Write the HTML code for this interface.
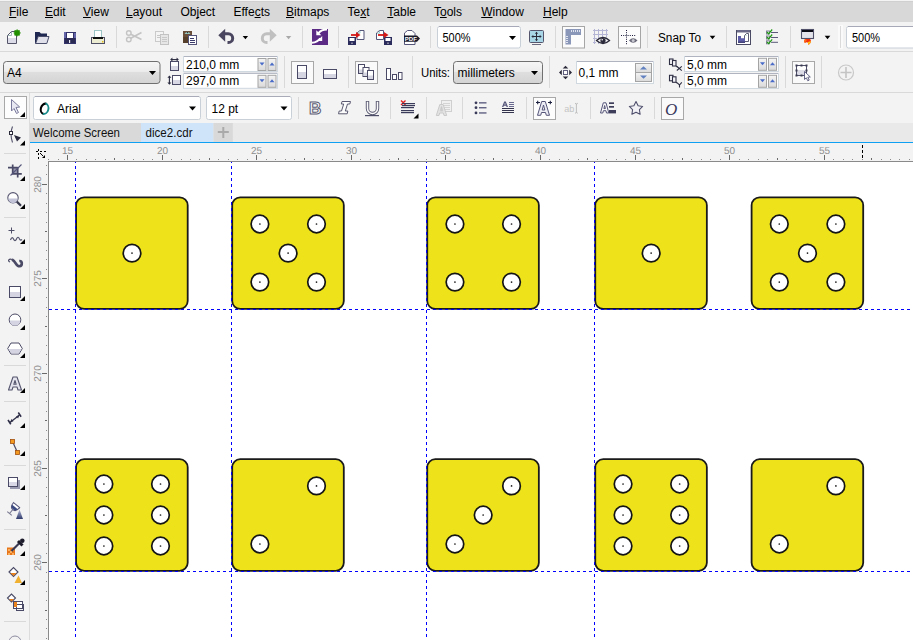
<!DOCTYPE html>
<html><head><meta charset="utf-8"><style>
*{margin:0;padding:0;box-sizing:border-box}
html,body{width:913px;height:640px;overflow:hidden;background:#f3f3f3;font-family:"Liberation Sans",sans-serif;font-size:12px;color:#000}
.a{position:absolute}
.t{position:absolute;white-space:nowrap;line-height:14px}
.sep{position:absolute;background:#d6d6d6;width:1px}
.hsep{position:absolute;background:#d6d6d6;height:1px}
u{text-decoration:none;border-bottom:1px solid #000;}
</style></head><body>
<svg style="position:absolute;left:0;top:0" width="913" height="640">
<rect x="30" y="143" width="883" height="18" fill="#f3f3f3"/>
<rect x="30" y="143" width="18" height="497" fill="#f3f3f3"/>
<rect x="49" y="162" width="864" height="478" fill="#ffffff"/>
<rect x="48" y="161" width="865" height="1" fill="#8a8a8a"/>
<rect x="48" y="161" width="1" height="479" fill="#8a8a8a"/>
<rect x="48" y="159" width="1" height="1" fill="#8a8a8a"/>
<rect x="58" y="159" width="1" height="1" fill="#8a8a8a"/>
<rect x="67" y="155" width="1" height="5" fill="#6a6a6a"/>
<text x="67.5" y="154" font-size="10" text-anchor="middle" fill="#8e8e8e" style="text-rendering:geometricPrecision" font-family="Liberation Sans">15</text>
<rect x="76" y="159" width="1" height="1" fill="#8a8a8a"/>
<rect x="86" y="159" width="1" height="1" fill="#8a8a8a"/>
<rect x="95" y="159" width="1" height="1" fill="#8a8a8a"/>
<rect x="105" y="159" width="1" height="1" fill="#8a8a8a"/>
<rect x="114" y="158" width="1" height="2" fill="#6a6a6a"/>
<rect x="124" y="159" width="1" height="1" fill="#8a8a8a"/>
<rect x="133" y="159" width="1" height="1" fill="#8a8a8a"/>
<rect x="143" y="159" width="1" height="1" fill="#8a8a8a"/>
<rect x="152" y="159" width="1" height="1" fill="#8a8a8a"/>
<rect x="162" y="155" width="1" height="5" fill="#6a6a6a"/>
<text x="162.5" y="154" font-size="10" text-anchor="middle" fill="#8e8e8e" style="text-rendering:geometricPrecision" font-family="Liberation Sans">20</text>
<rect x="171" y="159" width="1" height="1" fill="#8a8a8a"/>
<rect x="181" y="159" width="1" height="1" fill="#8a8a8a"/>
<rect x="190" y="159" width="1" height="1" fill="#8a8a8a"/>
<rect x="199" y="159" width="1" height="1" fill="#8a8a8a"/>
<rect x="209" y="158" width="1" height="2" fill="#6a6a6a"/>
<rect x="218" y="159" width="1" height="1" fill="#8a8a8a"/>
<rect x="228" y="159" width="1" height="1" fill="#8a8a8a"/>
<rect x="237" y="159" width="1" height="1" fill="#8a8a8a"/>
<rect x="247" y="159" width="1" height="1" fill="#8a8a8a"/>
<rect x="256" y="155" width="1" height="5" fill="#6a6a6a"/>
<text x="256.5" y="154" font-size="10" text-anchor="middle" fill="#8e8e8e" style="text-rendering:geometricPrecision" font-family="Liberation Sans">25</text>
<rect x="266" y="159" width="1" height="1" fill="#8a8a8a"/>
<rect x="275" y="159" width="1" height="1" fill="#8a8a8a"/>
<rect x="285" y="159" width="1" height="1" fill="#8a8a8a"/>
<rect x="294" y="159" width="1" height="1" fill="#8a8a8a"/>
<rect x="304" y="158" width="1" height="2" fill="#6a6a6a"/>
<rect x="313" y="159" width="1" height="1" fill="#8a8a8a"/>
<rect x="322" y="159" width="1" height="1" fill="#8a8a8a"/>
<rect x="332" y="159" width="1" height="1" fill="#8a8a8a"/>
<rect x="341" y="159" width="1" height="1" fill="#8a8a8a"/>
<rect x="351" y="155" width="1" height="5" fill="#6a6a6a"/>
<text x="351.5" y="154" font-size="10" text-anchor="middle" fill="#8e8e8e" style="text-rendering:geometricPrecision" font-family="Liberation Sans">30</text>
<rect x="360" y="159" width="1" height="1" fill="#8a8a8a"/>
<rect x="370" y="159" width="1" height="1" fill="#8a8a8a"/>
<rect x="379" y="159" width="1" height="1" fill="#8a8a8a"/>
<rect x="389" y="159" width="1" height="1" fill="#8a8a8a"/>
<rect x="398" y="158" width="1" height="2" fill="#6a6a6a"/>
<rect x="408" y="159" width="1" height="1" fill="#8a8a8a"/>
<rect x="417" y="159" width="1" height="1" fill="#8a8a8a"/>
<rect x="426" y="159" width="1" height="1" fill="#8a8a8a"/>
<rect x="436" y="159" width="1" height="1" fill="#8a8a8a"/>
<rect x="445" y="155" width="1" height="5" fill="#6a6a6a"/>
<text x="445.5" y="154" font-size="10" text-anchor="middle" fill="#8e8e8e" style="text-rendering:geometricPrecision" font-family="Liberation Sans">35</text>
<rect x="455" y="159" width="1" height="1" fill="#8a8a8a"/>
<rect x="464" y="159" width="1" height="1" fill="#8a8a8a"/>
<rect x="474" y="159" width="1" height="1" fill="#8a8a8a"/>
<rect x="483" y="159" width="1" height="1" fill="#8a8a8a"/>
<rect x="493" y="158" width="1" height="2" fill="#6a6a6a"/>
<rect x="502" y="159" width="1" height="1" fill="#8a8a8a"/>
<rect x="512" y="159" width="1" height="1" fill="#8a8a8a"/>
<rect x="521" y="159" width="1" height="1" fill="#8a8a8a"/>
<rect x="531" y="159" width="1" height="1" fill="#8a8a8a"/>
<rect x="540" y="155" width="1" height="5" fill="#6a6a6a"/>
<text x="540.5" y="154" font-size="10" text-anchor="middle" fill="#8e8e8e" style="text-rendering:geometricPrecision" font-family="Liberation Sans">40</text>
<rect x="549" y="159" width="1" height="1" fill="#8a8a8a"/>
<rect x="559" y="159" width="1" height="1" fill="#8a8a8a"/>
<rect x="568" y="159" width="1" height="1" fill="#8a8a8a"/>
<rect x="578" y="159" width="1" height="1" fill="#8a8a8a"/>
<rect x="587" y="158" width="1" height="2" fill="#6a6a6a"/>
<rect x="597" y="159" width="1" height="1" fill="#8a8a8a"/>
<rect x="606" y="159" width="1" height="1" fill="#8a8a8a"/>
<rect x="616" y="159" width="1" height="1" fill="#8a8a8a"/>
<rect x="625" y="159" width="1" height="1" fill="#8a8a8a"/>
<rect x="635" y="155" width="1" height="5" fill="#6a6a6a"/>
<text x="635.5" y="154" font-size="10" text-anchor="middle" fill="#8e8e8e" style="text-rendering:geometricPrecision" font-family="Liberation Sans">45</text>
<rect x="644" y="159" width="1" height="1" fill="#8a8a8a"/>
<rect x="654" y="159" width="1" height="1" fill="#8a8a8a"/>
<rect x="663" y="159" width="1" height="1" fill="#8a8a8a"/>
<rect x="672" y="159" width="1" height="1" fill="#8a8a8a"/>
<rect x="682" y="158" width="1" height="2" fill="#6a6a6a"/>
<rect x="691" y="159" width="1" height="1" fill="#8a8a8a"/>
<rect x="701" y="159" width="1" height="1" fill="#8a8a8a"/>
<rect x="710" y="159" width="1" height="1" fill="#8a8a8a"/>
<rect x="720" y="159" width="1" height="1" fill="#8a8a8a"/>
<rect x="729" y="155" width="1" height="5" fill="#6a6a6a"/>
<text x="729.5" y="154" font-size="10" text-anchor="middle" fill="#8e8e8e" style="text-rendering:geometricPrecision" font-family="Liberation Sans">50</text>
<rect x="739" y="159" width="1" height="1" fill="#8a8a8a"/>
<rect x="748" y="159" width="1" height="1" fill="#8a8a8a"/>
<rect x="758" y="159" width="1" height="1" fill="#8a8a8a"/>
<rect x="767" y="159" width="1" height="1" fill="#8a8a8a"/>
<rect x="777" y="158" width="1" height="2" fill="#6a6a6a"/>
<rect x="786" y="159" width="1" height="1" fill="#8a8a8a"/>
<rect x="795" y="159" width="1" height="1" fill="#8a8a8a"/>
<rect x="805" y="159" width="1" height="1" fill="#8a8a8a"/>
<rect x="814" y="159" width="1" height="1" fill="#8a8a8a"/>
<rect x="824" y="155" width="1" height="5" fill="#6a6a6a"/>
<text x="824.5" y="154" font-size="10" text-anchor="middle" fill="#8e8e8e" style="text-rendering:geometricPrecision" font-family="Liberation Sans">55</text>
<rect x="833" y="159" width="1" height="1" fill="#8a8a8a"/>
<rect x="843" y="159" width="1" height="1" fill="#8a8a8a"/>
<rect x="852" y="159" width="1" height="1" fill="#8a8a8a"/>
<rect x="862" y="159" width="1" height="1" fill="#8a8a8a"/>
<rect x="871" y="158" width="1" height="2" fill="#6a6a6a"/>
<rect x="881" y="159" width="1" height="1" fill="#8a8a8a"/>
<rect x="890" y="159" width="1" height="1" fill="#8a8a8a"/>
<rect x="899" y="159" width="1" height="1" fill="#8a8a8a"/>
<rect x="909" y="159" width="1" height="1" fill="#8a8a8a"/>
<rect x="46" y="165" width="1" height="1" fill="#8a8a8a"/>
<rect x="46" y="174" width="1" height="1" fill="#8a8a8a"/>
<rect x="42" y="184" width="5" height="1" fill="#6a6a6a"/>
<text transform="translate(41,184.5) rotate(-90)" x="0" y="0" font-size="10" text-anchor="middle" fill="#8e8e8e" style="text-rendering:geometricPrecision" font-family="Liberation Sans">280</text>
<rect x="46" y="193" width="1" height="1" fill="#8a8a8a"/>
<rect x="46" y="203" width="1" height="1" fill="#8a8a8a"/>
<rect x="46" y="212" width="1" height="1" fill="#8a8a8a"/>
<rect x="46" y="222" width="1" height="1" fill="#8a8a8a"/>
<rect x="45" y="231" width="2" height="1" fill="#6a6a6a"/>
<rect x="46" y="241" width="1" height="1" fill="#8a8a8a"/>
<rect x="46" y="250" width="1" height="1" fill="#8a8a8a"/>
<rect x="46" y="259" width="1" height="1" fill="#8a8a8a"/>
<rect x="46" y="269" width="1" height="1" fill="#8a8a8a"/>
<rect x="42" y="278" width="5" height="1" fill="#6a6a6a"/>
<text transform="translate(41,278.5) rotate(-90)" x="0" y="0" font-size="10" text-anchor="middle" fill="#8e8e8e" style="text-rendering:geometricPrecision" font-family="Liberation Sans">275</text>
<rect x="46" y="288" width="1" height="1" fill="#8a8a8a"/>
<rect x="46" y="297" width="1" height="1" fill="#8a8a8a"/>
<rect x="46" y="307" width="1" height="1" fill="#8a8a8a"/>
<rect x="46" y="316" width="1" height="1" fill="#8a8a8a"/>
<rect x="45" y="326" width="2" height="1" fill="#6a6a6a"/>
<rect x="46" y="335" width="1" height="1" fill="#8a8a8a"/>
<rect x="46" y="345" width="1" height="1" fill="#8a8a8a"/>
<rect x="46" y="354" width="1" height="1" fill="#8a8a8a"/>
<rect x="46" y="364" width="1" height="1" fill="#8a8a8a"/>
<rect x="42" y="373" width="5" height="1" fill="#6a6a6a"/>
<text transform="translate(41,373.5) rotate(-90)" x="0" y="0" font-size="10" text-anchor="middle" fill="#8e8e8e" style="text-rendering:geometricPrecision" font-family="Liberation Sans">270</text>
<rect x="46" y="382" width="1" height="1" fill="#8a8a8a"/>
<rect x="46" y="392" width="1" height="1" fill="#8a8a8a"/>
<rect x="46" y="401" width="1" height="1" fill="#8a8a8a"/>
<rect x="46" y="411" width="1" height="1" fill="#8a8a8a"/>
<rect x="45" y="420" width="2" height="1" fill="#6a6a6a"/>
<rect x="46" y="430" width="1" height="1" fill="#8a8a8a"/>
<rect x="46" y="439" width="1" height="1" fill="#8a8a8a"/>
<rect x="46" y="449" width="1" height="1" fill="#8a8a8a"/>
<rect x="46" y="458" width="1" height="1" fill="#8a8a8a"/>
<rect x="42" y="468" width="5" height="1" fill="#6a6a6a"/>
<text transform="translate(41,468.5) rotate(-90)" x="0" y="0" font-size="10" text-anchor="middle" fill="#8e8e8e" style="text-rendering:geometricPrecision" font-family="Liberation Sans">265</text>
<rect x="46" y="477" width="1" height="1" fill="#8a8a8a"/>
<rect x="46" y="487" width="1" height="1" fill="#8a8a8a"/>
<rect x="46" y="496" width="1" height="1" fill="#8a8a8a"/>
<rect x="46" y="505" width="1" height="1" fill="#8a8a8a"/>
<rect x="45" y="515" width="2" height="1" fill="#6a6a6a"/>
<rect x="46" y="524" width="1" height="1" fill="#8a8a8a"/>
<rect x="46" y="534" width="1" height="1" fill="#8a8a8a"/>
<rect x="46" y="543" width="1" height="1" fill="#8a8a8a"/>
<rect x="46" y="553" width="1" height="1" fill="#8a8a8a"/>
<rect x="42" y="562" width="5" height="1" fill="#6a6a6a"/>
<text transform="translate(41,562.5) rotate(-90)" x="0" y="0" font-size="10" text-anchor="middle" fill="#8e8e8e" style="text-rendering:geometricPrecision" font-family="Liberation Sans">260</text>
<rect x="46" y="572" width="1" height="1" fill="#8a8a8a"/>
<rect x="46" y="581" width="1" height="1" fill="#8a8a8a"/>
<rect x="46" y="591" width="1" height="1" fill="#8a8a8a"/>
<rect x="46" y="600" width="1" height="1" fill="#8a8a8a"/>
<rect x="45" y="610" width="2" height="1" fill="#6a6a6a"/>
<rect x="46" y="619" width="1" height="1" fill="#8a8a8a"/>
<rect x="46" y="628" width="1" height="1" fill="#8a8a8a"/>
<rect x="46" y="638" width="1" height="1" fill="#8a8a8a"/>
<line x1="862.5" y1="145" x2="862.5" y2="160" stroke="#000" stroke-width="1" stroke-dasharray="3,2"/>
<path d="M38 149h1v2h-1zM38 153h1v2h-1zM38 157h1v2h-1zM36 151h2v1h-2zM40 151h2v1h-2zM44 151h2v1h-2z" fill="#000"/>
<path d="M40 153h1v1h-1zM41 154h1v1h-1zM42 155h1v1h-1z" fill="#000"/>
<path d="M42 158 L45 155 V158 Z" fill="#000"/>

<rect x="76.1" y="197.3" width="111.6" height="111.6" rx="8" ry="8" fill="#eee31a" stroke="#1a1a1a" stroke-width="1.8"/>
<circle cx="132.0" cy="253.10000000000002" r="8.8" fill="#fff" stroke="#151515" stroke-width="1.7"/>
<circle cx="132.0" cy="253.10000000000002" r="0.85" fill="#1a1a1a"/>
<rect x="232.2" y="197.3" width="111.6" height="111.6" rx="8" ry="8" fill="#eee31a" stroke="#1a1a1a" stroke-width="1.8"/>
<circle cx="259.9" cy="224.0" r="8.8" fill="#fff" stroke="#151515" stroke-width="1.7"/>
<circle cx="259.9" cy="224.0" r="0.85" fill="#1a1a1a"/>
<circle cx="316.5" cy="224.0" r="8.8" fill="#fff" stroke="#151515" stroke-width="1.7"/>
<circle cx="316.5" cy="224.0" r="0.85" fill="#1a1a1a"/>
<circle cx="288.09999999999997" cy="253.10000000000002" r="8.8" fill="#fff" stroke="#151515" stroke-width="1.7"/>
<circle cx="288.09999999999997" cy="253.10000000000002" r="0.85" fill="#1a1a1a"/>
<circle cx="259.9" cy="282.1" r="8.8" fill="#fff" stroke="#151515" stroke-width="1.7"/>
<circle cx="259.9" cy="282.1" r="0.85" fill="#1a1a1a"/>
<circle cx="316.5" cy="282.1" r="8.8" fill="#fff" stroke="#151515" stroke-width="1.7"/>
<circle cx="316.5" cy="282.1" r="0.85" fill="#1a1a1a"/>
<rect x="427.25" y="197.3" width="111.6" height="111.6" rx="8" ry="8" fill="#eee31a" stroke="#1a1a1a" stroke-width="1.8"/>
<circle cx="454.95" cy="224.0" r="8.8" fill="#fff" stroke="#151515" stroke-width="1.7"/>
<circle cx="454.95" cy="224.0" r="0.85" fill="#1a1a1a"/>
<circle cx="511.55" cy="224.0" r="8.8" fill="#fff" stroke="#151515" stroke-width="1.7"/>
<circle cx="511.55" cy="224.0" r="0.85" fill="#1a1a1a"/>
<circle cx="454.95" cy="282.1" r="8.8" fill="#fff" stroke="#151515" stroke-width="1.7"/>
<circle cx="454.95" cy="282.1" r="0.85" fill="#1a1a1a"/>
<circle cx="511.55" cy="282.1" r="8.8" fill="#fff" stroke="#151515" stroke-width="1.7"/>
<circle cx="511.55" cy="282.1" r="0.85" fill="#1a1a1a"/>
<rect x="595.25" y="197.3" width="111.6" height="111.6" rx="8" ry="8" fill="#eee31a" stroke="#1a1a1a" stroke-width="1.8"/>
<circle cx="651.15" cy="253.10000000000002" r="8.8" fill="#fff" stroke="#151515" stroke-width="1.7"/>
<circle cx="651.15" cy="253.10000000000002" r="0.85" fill="#1a1a1a"/>
<rect x="751.6" y="197.3" width="111.6" height="111.6" rx="8" ry="8" fill="#eee31a" stroke="#1a1a1a" stroke-width="1.8"/>
<circle cx="779.3000000000001" cy="224.0" r="8.8" fill="#fff" stroke="#151515" stroke-width="1.7"/>
<circle cx="779.3000000000001" cy="224.0" r="0.85" fill="#1a1a1a"/>
<circle cx="835.9" cy="224.0" r="8.8" fill="#fff" stroke="#151515" stroke-width="1.7"/>
<circle cx="835.9" cy="224.0" r="0.85" fill="#1a1a1a"/>
<circle cx="807.5" cy="253.10000000000002" r="8.8" fill="#fff" stroke="#151515" stroke-width="1.7"/>
<circle cx="807.5" cy="253.10000000000002" r="0.85" fill="#1a1a1a"/>
<circle cx="779.3000000000001" cy="282.1" r="8.8" fill="#fff" stroke="#151515" stroke-width="1.7"/>
<circle cx="779.3000000000001" cy="282.1" r="0.85" fill="#1a1a1a"/>
<circle cx="835.9" cy="282.1" r="8.8" fill="#fff" stroke="#151515" stroke-width="1.7"/>
<circle cx="835.9" cy="282.1" r="0.85" fill="#1a1a1a"/>
<rect x="76.1" y="459.2" width="111.6" height="111.6" rx="8" ry="8" fill="#eee31a" stroke="#1a1a1a" stroke-width="1.8"/>
<circle cx="103.89999999999999" cy="484.0" r="8.8" fill="#fff" stroke="#151515" stroke-width="1.7"/>
<circle cx="103.89999999999999" cy="484.0" r="0.85" fill="#1a1a1a"/>
<circle cx="160.5" cy="484.0" r="8.8" fill="#fff" stroke="#151515" stroke-width="1.7"/>
<circle cx="160.5" cy="484.0" r="0.85" fill="#1a1a1a"/>
<circle cx="103.89999999999999" cy="515.0" r="8.8" fill="#fff" stroke="#151515" stroke-width="1.7"/>
<circle cx="103.89999999999999" cy="515.0" r="0.85" fill="#1a1a1a"/>
<circle cx="160.5" cy="515.0" r="8.8" fill="#fff" stroke="#151515" stroke-width="1.7"/>
<circle cx="160.5" cy="515.0" r="0.85" fill="#1a1a1a"/>
<circle cx="103.89999999999999" cy="546.0" r="8.8" fill="#fff" stroke="#151515" stroke-width="1.7"/>
<circle cx="103.89999999999999" cy="546.0" r="0.85" fill="#1a1a1a"/>
<circle cx="160.5" cy="546.0" r="8.8" fill="#fff" stroke="#151515" stroke-width="1.7"/>
<circle cx="160.5" cy="546.0" r="0.85" fill="#1a1a1a"/>
<rect x="232.2" y="459.2" width="111.6" height="111.6" rx="8" ry="8" fill="#eee31a" stroke="#1a1a1a" stroke-width="1.8"/>
<circle cx="316.5" cy="485.9" r="8.8" fill="#fff" stroke="#151515" stroke-width="1.7"/>
<circle cx="316.5" cy="485.9" r="0.85" fill="#1a1a1a"/>
<circle cx="259.9" cy="544.0" r="8.8" fill="#fff" stroke="#151515" stroke-width="1.7"/>
<circle cx="259.9" cy="544.0" r="0.85" fill="#1a1a1a"/>
<rect x="427.25" y="459.2" width="111.6" height="111.6" rx="8" ry="8" fill="#eee31a" stroke="#1a1a1a" stroke-width="1.8"/>
<circle cx="511.55" cy="485.9" r="8.8" fill="#fff" stroke="#151515" stroke-width="1.7"/>
<circle cx="511.55" cy="485.9" r="0.85" fill="#1a1a1a"/>
<circle cx="483.15" cy="515.0" r="8.8" fill="#fff" stroke="#151515" stroke-width="1.7"/>
<circle cx="483.15" cy="515.0" r="0.85" fill="#1a1a1a"/>
<circle cx="454.95" cy="544.0" r="8.8" fill="#fff" stroke="#151515" stroke-width="1.7"/>
<circle cx="454.95" cy="544.0" r="0.85" fill="#1a1a1a"/>
<rect x="595.25" y="459.2" width="111.6" height="111.6" rx="8" ry="8" fill="#eee31a" stroke="#1a1a1a" stroke-width="1.8"/>
<circle cx="623.05" cy="484.0" r="8.8" fill="#fff" stroke="#151515" stroke-width="1.7"/>
<circle cx="623.05" cy="484.0" r="0.85" fill="#1a1a1a"/>
<circle cx="679.65" cy="484.0" r="8.8" fill="#fff" stroke="#151515" stroke-width="1.7"/>
<circle cx="679.65" cy="484.0" r="0.85" fill="#1a1a1a"/>
<circle cx="623.05" cy="515.0" r="8.8" fill="#fff" stroke="#151515" stroke-width="1.7"/>
<circle cx="623.05" cy="515.0" r="0.85" fill="#1a1a1a"/>
<circle cx="679.65" cy="515.0" r="8.8" fill="#fff" stroke="#151515" stroke-width="1.7"/>
<circle cx="679.65" cy="515.0" r="0.85" fill="#1a1a1a"/>
<circle cx="623.05" cy="546.0" r="8.8" fill="#fff" stroke="#151515" stroke-width="1.7"/>
<circle cx="623.05" cy="546.0" r="0.85" fill="#1a1a1a"/>
<circle cx="679.65" cy="546.0" r="8.8" fill="#fff" stroke="#151515" stroke-width="1.7"/>
<circle cx="679.65" cy="546.0" r="0.85" fill="#1a1a1a"/>
<rect x="751.6" y="459.2" width="111.6" height="111.6" rx="8" ry="8" fill="#eee31a" stroke="#1a1a1a" stroke-width="1.8"/>
<circle cx="835.9" cy="485.9" r="8.8" fill="#fff" stroke="#151515" stroke-width="1.7"/>
<circle cx="835.9" cy="485.9" r="0.85" fill="#1a1a1a"/>
<circle cx="779.3000000000001" cy="544.0" r="8.8" fill="#fff" stroke="#151515" stroke-width="1.7"/>
<circle cx="779.3000000000001" cy="544.0" r="0.85" fill="#1a1a1a"/>
<line x1="75.5" y1="162" x2="75.5" y2="640" stroke="#0000ff" stroke-width="1" stroke-dasharray="3,3" stroke-dashoffset="2"/>
<line x1="231.5" y1="162" x2="231.5" y2="640" stroke="#0000ff" stroke-width="1" stroke-dasharray="3,3" stroke-dashoffset="2"/>
<line x1="426.5" y1="162" x2="426.5" y2="640" stroke="#0000ff" stroke-width="1" stroke-dasharray="3,3" stroke-dashoffset="2"/>
<line x1="594.5" y1="162" x2="594.5" y2="640" stroke="#0000ff" stroke-width="1" stroke-dasharray="3,3" stroke-dashoffset="2"/>
<line x1="49" y1="309.5" x2="913" y2="309.5" stroke="#0000ff" stroke-width="1" stroke-dasharray="3,3"/>
<line x1="49" y1="571.5" x2="913" y2="571.5" stroke="#0000ff" stroke-width="1" stroke-dasharray="3,3"/>
</svg>
<svg style="position:absolute;left:0;top:0" width="913" height="640" font-family="Liberation Sans">
<rect x="0" y="0" width="913" height="22" fill="#d8d8d8" />
<rect x="0" y="0" width="913" height="1" fill="#f4f4f4" />
<rect x="0" y="1" width="913" height="1" fill="#d0d0d0" />
<text id="m_File" x="9" y="16" font-size="12" fill="#000">File</text>
<text id="m_Edit" x="45" y="16" font-size="12" fill="#000">Edit</text>
<text id="m_View" x="83" y="16" font-size="12" fill="#000">View</text>
<text id="m_Layout" x="126" y="16" font-size="12" fill="#000">Layout</text>
<text id="m_Object" x="180.5" y="16" font-size="12" fill="#000">Object</text>
<text id="m_Effects" x="233.5" y="16" font-size="12" fill="#000">Effects</text>
<text id="m_Bitmaps" x="286" y="16" font-size="12" fill="#000">Bitmaps</text>
<text id="m_Text" x="347.5" y="16" font-size="12" fill="#000">Text</text>
<text id="m_Table" x="387.3" y="16" font-size="12" fill="#000">Table</text>
<text id="m_Tools" x="434" y="16" font-size="12" fill="#000">Tools</text>
<text id="m_Window" x="481.2" y="16" font-size="12" fill="#000">Window</text>
<text id="m_Help" x="543" y="16" font-size="12" fill="#000">Help</text>
<rect x="9" y="17" width="7.3" height="1" fill="#000" />
<rect x="45" y="17" width="8" height="1" fill="#000" />
<rect x="83" y="17" width="7.8" height="1" fill="#000" />
<rect x="126" y="17" width="6.7" height="1" fill="#000" />
<rect x="196.5" y="17" width="2.7" height="1" fill="#000" />
<rect x="254.6" y="17" width="6" height="1" fill="#000" />
<rect x="286" y="17" width="8" height="1" fill="#000" />
<rect x="360.2" y="17" width="6" height="1" fill="#000" />
<rect x="387.3" y="17" width="6" height="1" fill="#000" />
<rect x="440" y="17" width="6.7" height="1" fill="#000" />
<rect x="481.2" y="17" width="11.3" height="1" fill="#000" />
<rect x="543" y="17" width="8.7" height="1" fill="#000" />
<rect x="0" y="51" width="913" height="1" fill="#d9d9d9" />
<rect x="0" y="92" width="913" height="1" fill="#d9d9d9" />
<rect x="29" y="93" width="1" height="547" fill="#dcdcdc" />
<rect x="30" y="123" width="883" height="19" fill="#e9e9e9" />
<rect x="30" y="123" width="111" height="19" fill="#d9d9d9" />
<rect x="141" y="123" width="72.5" height="19" fill="#cfe4f9" />
<rect x="213.5" y="123" width="19.3" height="19" fill="#d9d9d9" />
<rect x="30" y="142" width="883" height="1" fill="#0ea0f2" />
<text x="33" y="137" font-size="12" fill="#111" textLength="87" lengthAdjust="spacingAndGlyphs">Welcome Screen</text>
<text x="145.5" y="137" font-size="12" fill="#111" textLength="47" lengthAdjust="spacingAndGlyphs">dice2.cdr</text>
<path d="M223.3 127v11M217.8 132h11" stroke="#aaaaaa" stroke-width="2"/>
<path d="M7.5 35.5 L11.5 31.5 H16.5 V43.5 H7.5 Z" fill="#fff" stroke="#55556a" stroke-width="1"/>
<rect x="8" y="38" width="8" height="5" fill="#dcdce8"/>
<path d="M8 35.5 H11.5 V32" fill="none" stroke="#9fb8b8" stroke-width="1"/>
<path d="M20.50 32.90 L19.50 33.89 L19.50 35.30 L18.09 35.30 L17.10 36.30 L16.11 35.30 L14.70 35.30 L14.70 33.89 L13.70 32.90 L14.70 31.91 L14.70 30.50 L16.11 30.50 L17.10 29.50 L18.09 30.50 L19.50 30.50 L19.50 31.91Z" fill="#229000" stroke="#229000" stroke-width="0.6" stroke-linejoin="round"/>
<path d="M35 32 H39.5 L41 33.5 H47 V36 H38.5 L36.5 43.5 H35 Z" fill="#1f2850"/>
<path d="M38.2 36.5 H49 L46.8 43.5 H35.6 Z" fill="#dfe0ea" stroke="#4a4d6a" stroke-width="1"/>
<rect x="64" y="32" width="12" height="12" fill="#34346a"/>
<rect x="64" y="32" width="2" height="6" fill="#6464a8"/>
<rect x="74" y="33" width="2" height="5" fill="#6464a8"/>
<rect x="67" y="33" width="6" height="5" fill="#fff"/>
<rect x="65" y="38" width="10" height="5" fill="#2a2a55"/>
<rect x="69" y="40" width="1.2" height="3" fill="#e8e8f0"/>
<rect x="94.5" y="30.5" width="7" height="7" fill="#fff" stroke="#9cc4c4" stroke-width="1"/>
<rect x="91.5" y="37.5" width="13" height="6" fill="#ececd2" stroke="#4e4e64" stroke-width="1"/>
<rect x="93" y="37" width="10" height="2" fill="#111"/>
<rect x="102" y="41" width="1.5" height="1.5" fill="#e0c020"/>
<rect x="116" y="26" width="1" height="22" fill="#d9d9d9" />
<rect x="208" y="26" width="1" height="22" fill="#d9d9d9" />
<rect x="302" y="26" width="1" height="22" fill="#d9d9d9" />
<rect x="338" y="26" width="1" height="22" fill="#d9d9d9" />
<rect x="430" y="26" width="1" height="22" fill="#d9d9d9" />
<rect x="555" y="26" width="1" height="22" fill="#d9d9d9" />
<rect x="647" y="26" width="1" height="22" fill="#d9d9d9" />
<rect x="726" y="26" width="1" height="22" fill="#d9d9d9" />
<rect x="790" y="26" width="1" height="22" fill="#d9d9d9" />
<rect x="838" y="25" width="5" height="24" fill="#fafafa" />
<rect x="840" y="26" width="1" height="22" fill="#dadada" />
<circle cx="128.8" cy="33" r="2.3" fill="none" stroke="#c4c4c4" stroke-width="1.4"/>
<circle cx="128.8" cy="39.5" r="2.3" fill="none" stroke="#c4c4c4" stroke-width="1.4"/>
<path d="M130.8 34.3 L141.5 39.5 M130.8 38.2 L141.5 32.5" stroke="#c4c4c4" stroke-width="1.6"/>
<rect x="155.5" y="31.5" width="8" height="10" fill="#f4f4f4" stroke="#cacaca"/>
<rect x="160.5" y="34.5" width="8" height="10" fill="#e6e6e6" stroke="#c2c2c2"/>
<path d="M157 35.5h4M157 37.5h3M162 37.5h5M162 39.5h5M162 41.5h5" stroke="#c8c8c8"/>
<rect x="183" y="31" width="9" height="12" fill="#6a4d36"/>
<rect x="183" y="37" width="9" height="6" fill="#56402c"/>
<path d="M184.5 34 Q187.5 29.5 190.5 34 Z" fill="#9ccac4"/>
<circle cx="187.5" cy="32.5" r="0.8" fill="#333"/>
<rect x="188.5" y="35.5" width="8" height="9" fill="#fff" stroke="#55557a"/>
<path d="M190 38.5h4M190 40.5h5M190 42.5h5" stroke="#3a3a6a"/>
<path d="M218.3 35.3 L225.2 28.8 V41.8 Z" fill="#4a4660"/>
<path d="M224 33.8 H228.3 A4.4 4.4 0 0 1 228.3 42.6 H227.5" fill="none" stroke="#4a4660" stroke-width="3"/>
<path d="M242.70000000000002 35.9 H248.1 L245.4 39.300000000000004 Z" fill="#000"/>
<path d="M276.7 35.3 L269.8 28.8 V41.8 Z" fill="#c0c0c0"/>
<path d="M271 33.8 H266.7 A4.4 4.4 0 0 0 266.7 42.6 H267.5" fill="none" stroke="#c0c0c0" stroke-width="3"/>
<path d="M285.90000000000003 35.9 H291.3 L288.6 39.300000000000004 Z" fill="#a8a8a8"/>
<rect x="312" y="29" width="16" height="16" fill="#5a2a84"/>
<path d="M316.3 30.3 V35.3 H321.3 Z M322.2 36 V41 H317.2 Z" fill="#fff"/>
<path d="M318.3 33.3 Q321.5 29.5 327 29.6 M320.3 38.3 Q317.5 42.3 312 42.8" fill="none" stroke="#fff" stroke-width="2"/>
<path d="M357.0 33 L360.0 30.5 H364.0 V39.5 H357.0 Z" fill="#fff" stroke="#55557a"/><path d="M357.5 33.2 H360.0 V31" fill="none" stroke="#9cc"/>
<rect x="348" y="37" width="8" height="8" fill="#2c2c5c"/><rect x="349.5" y="38" width="5" height="3" fill="#fff"/><rect x="351.5" y="42.5" width="1" height="1.5" fill="#ddd"/>
<path d="M351 35 H357" stroke="#d41818" stroke-width="1.8"/><path d="M356 32 L360.5 35 L356 38 Z" fill="#d41818"/>
<path d="M376.5 33 L379.5 30.5 H383.5 V39.5 H376.5 Z" fill="#fff" stroke="#55557a"/><path d="M377 33.2 H379.5 V31" fill="none" stroke="#9cc"/>
<rect x="384" y="37" width="8" height="8" fill="#2c2c5c"/><rect x="385.5" y="38" width="5" height="3" fill="#fff"/><rect x="387.5" y="42.5" width="1" height="1.5" fill="#ddd"/>
<path d="M378 35 H385" stroke="#d41818" stroke-width="1.8"/><path d="M384 32 L388.5 35 L384 38 Z" fill="#d41818"/>
<path d="M404.5 33 L407.5 30.5 H412 L415 33.5 V44.5 H404.5 Z" fill="#fff" stroke="#55557a"/>
<path d="M404 35.5 H417 L420 38.5 L417 41.8 H404 Z" fill="#1a1a2a"/>
<text x="404.8" y="41" font-size="6" font-weight="bold" fill="#fff" font-family="Liberation Sans">PDF</text>
<rect x="437.5" y="26.5" width="83" height="21.5" rx="2" fill="#fff" stroke="#c9d0d8"/>
<rect x="439" y="26" width="80" height="1" fill="#a7a9b8" />
<text x="442.5" y="42" font-size="12" fill="#000" font-family="Liberation Sans" textLength="28" lengthAdjust="spacingAndGlyphs">500%</text>
<path d="M509.0 36.0 H516.0 L512.5 40.0 Z" fill="#000"/>
<rect x="529.5" y="30.5" width="14" height="12" rx="1" fill="#a9d6e6" stroke="#55556e"/>
<path d="M532 44.5 H541" stroke="#6a6a80"/>
<path d="M536.5 32.5 V40.5 M532 36.5 H541" stroke="#2a2a3a" stroke-width="1"/>
<path d="M536.5 31.8 l-1.6 2 h3.2z M536.5 41.2 l-1.6 -2 h3.2z M531.3 36.5 l2 -1.6 v3.2z M541.7 36.5 l-2 -1.6 v3.2z" fill="#2a2a3a"/>
<rect x="562.5" y="26.5" width="22" height="21.5" fill="#fcfcfc" stroke="#a6a6a6"/>
<path d="M565.5 29 H581 V35 H571 V44.5 H565.5 Z" fill="#8b97b8"/>
<path d="M571.5 30v2M573.5 30v2M575.5 30v2M577.5 30v2M579.5 30v2M566 36.5h2M566 38.5h2M566 40.5h2M566 42.5h2" stroke="#dfe4ef" stroke-width="1"/>
<path d="M594.5 29v15M598.5 29v15M602.5 29v8M606.5 29v8M593 30.5h15M593 34.5h15M593 38.5h4M593 42.5h3" stroke="#b4b4d4" stroke-width="1"/>
<path d="M596.5 40.5 Q603 34.5 609.5 40.5 Q603 46.5 596.5 40.5 Z" fill="#f0f0f4" stroke="#2a2a3a" stroke-width="1.3"/>
<circle cx="603" cy="40.5" r="2.6" fill="#2a2a3a"/><circle cx="602.2" cy="39.7" r="0.8" fill="#fff"/>
<rect x="618.5" y="26.5" width="22" height="21.5" fill="#fcfcfc" stroke="#a6a6a6"/>
<path d="M626.5 30v15M621 35.5h15" stroke="#1a1a3a" stroke-width="1" stroke-dasharray="1,1.2"/>
<path d="M629 40.5 Q633 36 637.5 40.5 Q633 45 629 40.5 Z" fill="#6a6a7a"/>
<circle cx="633.2" cy="40.5" r="1.5" fill="#c8c8d0"/>
<text x="658" y="42" font-size="12" fill="#000" font-family="Liberation Sans" textLength="43" lengthAdjust="spacingAndGlyphs">Snap To</text>
<path d="M709.7 35.8 H715.3 L712.5 39.2 Z" fill="#000"/>
<rect x="736.5" y="30.5" width="14" height="14" fill="#fff" stroke="#4a4a64"/>
<rect x="737" y="30" width="13" height="2.5" fill="#6a6a88" />
<path d="M744.5 35.5 L746.5 33.5 H748.5 V41.5 H744.5 Z" fill="#fff" stroke="#4a4a64" stroke-width="0.9"/>
<path d="M745 36 L746.5 34.5 V36 Z" fill="#9ccac4"/>
<path d="M738 43 V36 H741 V38.3 H745 V43 Z" fill="#5c5ca8"/>
<rect x="738" y="41.5" width="7" height="1.5" fill="#44447a" />
<rect x="766.5" y="31.0" width="3" height="3" fill="#e8e8ee" stroke="#7a7a90" stroke-width="0.9"/>
<path d="M767 32.0 l1.6 1.8 l3.6 -4.3" fill="none" stroke="#1f9a10" stroke-width="1.2"/>
<rect x="771" y="32.0" width="7" height="1" fill="#5a5a78" />
<rect x="766.5" y="36.0" width="3" height="3" fill="#e8e8ee" stroke="#7a7a90" stroke-width="0.9"/>
<path d="M767 37.0 l1.6 1.8 l3.6 -4.3" fill="none" stroke="#1f9a10" stroke-width="1.2"/>
<rect x="771" y="37.0" width="7" height="1" fill="#5a5a78" />
<rect x="766.5" y="40.8" width="3" height="3" fill="#e8e8ee" stroke="#7a7a90" stroke-width="0.9"/>
<path d="M767 41.8 l1.6 1.8 l3.6 -4.3" fill="none" stroke="#1f9a10" stroke-width="1.2"/>
<rect x="771" y="41.8" width="7" height="1" fill="#5a5a78" />
<rect x="801.5" y="29.5" width="12" height="9" fill="#e2e2ea" stroke="#50506a" stroke-width="1.1"/>
<rect x="802" y="30" width="11" height="2" fill="#0a0a14" />
<path d="M805 39 Q803.3 41.5 805 43 Q806 42 807.3 42.3 Q808.5 43 808.3 45 Q811.5 43 810.8 40 L810 39 Z" fill="#f03010"/>
<path d="M807.3 42.3 Q808.5 43 808.3 45 Q811.2 43.5 810.9 41 Z" fill="#ffc010"/>
<path d="M805 39 Q803.3 41.5 805 43 Q805.5 41 807 40 Z" fill="#ff7010"/>
<path d="M824.7 35.8 H830.3 L827.5 39.2 Z" fill="#000"/>
<rect x="846.5" y="26.5" width="80" height="21.5" rx="2" fill="#fff" stroke="#c9d0d8"/>
<rect x="848" y="26" width="70" height="1" fill="#a7a9b8" />
<text x="852" y="42" font-size="12" fill="#000" font-family="Liberation Sans" textLength="28" lengthAdjust="spacingAndGlyphs">500%</text>
<defs><linearGradient id="cg" x1="0" y1="0" x2="0" y2="1"><stop offset="0" stop-color="#f6f6f6"/><stop offset="0.45" stop-color="#ececec"/><stop offset="0.5" stop-color="#dedede"/><stop offset="1" stop-color="#d4d4d4"/></linearGradient><linearGradient id="sg" x1="0" y1="0" x2="0" y2="1"><stop offset="0" stop-color="#f4f4f4"/><stop offset="1" stop-color="#dadada"/></linearGradient></defs>
<rect x="3.5" y="61.5" width="156.5" height="22" rx="3" fill="url(#cg)" stroke="#707070"/>
<text x="7" y="77" font-size="12" fill="#000" font-family="Liberation Sans" >A4</text>
<path d="M149.0 71.0 H156.0 L152.5 75.0 Z" fill="#000"/>
<path d="M171.5 59.6 H177.5" stroke="#2a2a40" stroke-width="1.1"/><path d="M170.2 59.6 l2.2 -2 v4z M178.8 59.6 l-2.2 -2 v4z" fill="#2a2a40"/>
<rect x="170.5" y="61.5" width="8" height="9" fill="#fff" stroke="#4a4a66"/><rect x="171" y="66" width="7" height="4" fill="#d8d8e4"/>
<path d="M169.4 77 V83.3" stroke="#2a2a40" stroke-width="1.1"/><path d="M169.4 75.6 l-2 2.2 h4z M169.4 84.7 l-2 -2.2 h4z" fill="#2a2a40"/>
<rect x="172.5" y="75.5" width="8" height="9" fill="#fff" stroke="#4a4a66"/><rect x="173" y="80" width="7" height="4" fill="#d8d8e4"/>
<rect x="183.5" y="56.5" width="94" height="15" fill="#fff" stroke="#d0d8e0"/>
<rect x="184" y="56" width="93" height="1" fill="#b0b4c0" />
<text x="186" y="69" font-size="12" fill="#000" font-family="Liberation Sans" >210,0 mm</text>
<rect x="258.0" y="58.5" width="8" height="12" fill="url(#sg)" stroke="#a4a4a4"/><path d="M259.5 62.5 H264.5 L262.0 65.5 Z" fill="#4a6cc8"/>
<rect x="268.0" y="58.5" width="8" height="12" fill="url(#sg)" stroke="#a4a4a4"/><path d="M269.5 65.5 H274.5 L272.0 62.5 Z" fill="#4a6cc8"/>
<rect x="183.5" y="73.3" width="94" height="15" fill="#fff" stroke="#d0d8e0"/>
<rect x="184" y="72.8" width="93" height="1" fill="#b0b4c0" />
<text x="186" y="85" font-size="12" fill="#000" font-family="Liberation Sans" >297,0 mm</text>
<rect x="258.0" y="75.3" width="8" height="12" fill="url(#sg)" stroke="#a4a4a4"/><path d="M259.5 79.3 H264.5 L262.0 82.3 Z" fill="#4a6cc8"/>
<rect x="268.0" y="75.3" width="8" height="12" fill="url(#sg)" stroke="#a4a4a4"/><path d="M269.5 82.3 H274.5 L272.0 79.3 Z" fill="#4a6cc8"/>
<rect x="284" y="56" width="1" height="32" fill="#d9d9d9" />
<rect x="291.5" y="61.5" width="22" height="22" fill="#fafafa" stroke="#a8a8a8"/>
<rect x="297.5" y="65.5" width="9" height="13" fill="#fff" stroke="#4a4a66"/><rect x="298" y="72" width="8" height="6" fill="#d6d6e2"/>
<rect x="323.5" y="69.5" width="13" height="9" fill="#fff" stroke="#4a4a66"/><rect x="324" y="74" width="12" height="4" fill="#d6d6e2"/>
<rect x="348" y="56" width="1" height="32" fill="#d9d9d9" />
<rect x="355.5" y="61.5" width="22" height="22" fill="#fafafa" stroke="#a8a8a8"/>
<rect x="358.5" y="64.5" width="6" height="9" fill="#fff" stroke="#4a4a66"/><rect x="359.0" y="69.5" width="5" height="3.5" fill="#d6d6e2"/>
<rect x="363" y="67.5" width="6" height="9" fill="#fff" stroke="#4a4a66"/><rect x="363.5" y="72.5" width="5" height="3.5" fill="#d6d6e2"/>
<rect x="367.5" y="70.5" width="6" height="9" fill="#fff" stroke="#4a4a66"/><rect x="368.0" y="75.5" width="5" height="3.5" fill="#d6d6e2"/>
<rect x="386.5" y="68.5" width="4" height="11" fill="#fff" stroke="#4a4a66"/>
<rect x="392.5" y="74.5" width="4" height="5" fill="#fff" stroke="#4a4a66"/>
<rect x="398.5" y="72.5" width="3.5" height="7" fill="#fff" stroke="#4a4a66"/>
<rect x="412" y="56" width="1" height="32" fill="#d9d9d9" />
<text x="421" y="77" font-size="12" fill="#000" font-family="Liberation Sans" textLength="29" lengthAdjust="spacingAndGlyphs">Units:</text>
<rect x="453.5" y="61.5" width="89" height="22" rx="3" fill="url(#cg)" stroke="#707070"/>
<text x="457.5" y="77" font-size="12" fill="#000" font-family="Liberation Sans" >millimeters</text>
<path d="M531.0 71.0 H538.0 L534.5 75.0 Z" fill="#000"/>
<rect x="549" y="56" width="1" height="32" fill="#d9d9d9" />
<rect x="563.5" y="70.5" width="4" height="4" fill="#fff" stroke="#60607e"/>
<path d="M565.5 65.8 l-2.8 2.8 h5.6z M565.5 79.2 l-2.8 -2.8 h5.6z M559 72.5 l2.8 -2.8 v5.6z M572 72.5 l-2.8 -2.8 v5.6z" fill="#2a2a3a"/>
<rect x="576.5" y="61.5" width="77" height="22" fill="#fff" stroke="#d0d8e0"/>
<rect x="577" y="61" width="76" height="1" fill="#b0b4c0" />
<text x="578.5" y="77" font-size="12" fill="#000" font-family="Liberation Sans" >0,1 mm</text>
<rect x="635.5" y="63.5" width="16" height="9" fill="url(#sg)" stroke="#a4a4a4"/><rect x="635.5" y="72.5" width="16" height="9" fill="url(#sg)" stroke="#a4a4a4"/>
<path d="M640 69.5 H647 L643.5 66.3Z M640 75.5 H647 L643.5 78.7Z" fill="#6080c0"/>
<rect x="660" y="56" width="1" height="32" fill="#d9d9d9" />
<rect x="669.5" y="59.0" width="3.5" height="5.5" fill="#f4f4f8" stroke="#2e2e44" stroke-width="1.1"/><rect x="672.5" y="60.5" width="3.5" height="5.5" fill="#f4f4f8" stroke="#2e2e44" stroke-width="1.1"/>
<path d="M676 66.0 L677.5 67.0" stroke="#2e2e44" stroke-width="1.1"/>
<path d="M676.8 70.5 L681.8 66.3 M677 66.5 L681.8 70.7" stroke="#2e2e44" stroke-width="1.1"/>
<rect x="669.5" y="75.3" width="3.5" height="5.5" fill="#f4f4f8" stroke="#2e2e44" stroke-width="1.1"/><rect x="672.5" y="76.8" width="3.5" height="5.5" fill="#f4f4f8" stroke="#2e2e44" stroke-width="1.1"/>
<path d="M676 82.3 L677.5 83.3" stroke="#2e2e44" stroke-width="1.1"/>
<path d="M677.3 82.8 L679.5 85.0 L681.8 82.3 M679.5 85.0 V87.6" stroke="#2e2e44" stroke-width="1.1" fill="none"/>
<rect x="684.5" y="56.5" width="94" height="15" fill="#fff" stroke="#d0d8e0"/>
<rect x="685" y="56" width="93" height="1" fill="#b0b4c0" />
<text x="687" y="69" font-size="12" fill="#000" font-family="Liberation Sans" >5,0 mm</text>
<rect x="758.5" y="58.3" width="8" height="12" fill="url(#sg)" stroke="#a4a4a4"/><path d="M760 62.3 H765 L762.5 65.3 Z" fill="#4a6cc8"/>
<rect x="768.5" y="58.3" width="8" height="12" fill="url(#sg)" stroke="#a4a4a4"/><path d="M770 65.3 H775 L772.5 62.3 Z" fill="#4a6cc8"/>
<rect x="684.5" y="73.5" width="94" height="15" fill="#fff" stroke="#d0d8e0"/>
<rect x="685" y="73" width="93" height="1" fill="#b0b4c0" />
<text x="687" y="85" font-size="12" fill="#000" font-family="Liberation Sans" >5,0 mm</text>
<rect x="758.5" y="75.3" width="8" height="12" fill="url(#sg)" stroke="#a4a4a4"/><path d="M760 79.3 H765 L762.5 82.3 Z" fill="#4a6cc8"/>
<rect x="768.5" y="75.3" width="8" height="12" fill="url(#sg)" stroke="#a4a4a4"/><path d="M770 82.3 H775 L772.5 79.3 Z" fill="#4a6cc8"/>
<rect x="785" y="56" width="1" height="32" fill="#d9d9d9" />
<rect x="792.5" y="61.5" width="22" height="22" fill="#fafafa" stroke="#a8a8a8"/>
<rect x="796.5" y="65.5" width="10" height="10" fill="#fff" stroke="#50506a"/>
<rect x="797" y="70" width="9" height="5" fill="#dcdce6"/>
<path d="M795.5 64.5h2v2h-2zM800.5 64.5h2v2h-2zM805.5 64.5h2v2h-2zM795.5 69.5h2v2h-2zM805.5 69.5h2v2h-2zM795.5 74.5h2v2h-2zM800.5 74.5h2v2h-2z" fill="#3a3a50"/>
<path d="M804.5 71.5 V79.5 L806.3 77.8 L807.8 80.8 L809.2 80.1 L807.8 77.2 L810.3 77 Z" fill="#fff" stroke="#55557a" stroke-width="0.9" stroke-linejoin="round"/>
<rect x="821" y="56" width="1" height="32" fill="#d9d9d9" />
<circle cx="846" cy="72.5" r="7.5" fill="none" stroke="#c8c8c8" stroke-width="1.2"/>
<path d="M846 67v11M840.5 72.5h11" stroke="#c4c4c4" stroke-width="1.6"/>
<rect x="33.5" y="96.5" width="167" height="23" rx="2" fill="#fff" stroke="#c9d0d8"/>
<rect x="35" y="96" width="164" height="1" fill="#a9abb8" />
<g transform="translate(44.6 108.8) rotate(14)"><path d="M0.5 -5.3 A4.3 5.3 0 0 0 0.5 5.3" fill="none" stroke="#000" stroke-width="2.1"/><path d="M-0.5 -5.3 A4.3 5.3 0 0 1 -0.5 5.3" fill="none" stroke="#1a8c8c" stroke-width="1.9"/></g>
<text x="57" y="113" font-size="12" fill="#000" font-family="Liberation Sans" >Arial</text>
<path d="M189.0 106.5 H196.0 L192.5 110.5 Z" fill="#000"/>
<rect x="206.5" y="96.5" width="85" height="23" rx="2" fill="#fff" stroke="#c9d0d8"/>
<rect x="208" y="96" width="82" height="1" fill="#a9abb8" />
<text x="211.5" y="113" font-size="12" fill="#000" font-family="Liberation Sans" >12 pt</text>
<path d="M280.5 106.5 H287.5 L284 110.5 Z" fill="#000"/>
<rect x="298" y="97" width="1" height="22" fill="#d9d9d9" />
<rect x="390" y="97" width="1" height="22" fill="#d9d9d9" />
<rect x="426" y="97" width="1" height="22" fill="#d9d9d9" />
<rect x="462" y="97" width="1" height="22" fill="#d9d9d9" />
<rect x="526" y="97" width="1" height="22" fill="#d9d9d9" />
<rect x="590" y="97" width="1" height="22" fill="#d9d9d9" />
<rect x="654" y="97" width="1" height="22" fill="#d9d9d9" />
<text x="309" y="113.5" font-size="17" font-weight="bold" fill="#fcfcfc" stroke="#5a5a72" stroke-width="1" font-family="Liberation Sans">B</text>
<path d="M342 101.5 H350.5 L349.8 104 H347.5 L345.3 111 H347.8 L347.2 113.8 H338.5 L339.2 111 H341.5 L343.7 104 H341.3 Z" fill="#fcfcfc" stroke="#5a5a72" stroke-width="1" stroke-linejoin="round"/>
<path d="M367.5 101 V108.5 A5 5 0 0 0 377.5 108.5 V101" fill="none" stroke="#5a5a72" stroke-width="3.4"/>
<path d="M367.5 101.8 V108.5 A5 5 0 0 0 377.5 108.5 V101.8" fill="none" stroke="#fcfcfc" stroke-width="1.5"/>
<rect x="365" y="115" width="14" height="1.2" fill="#4e4e68" />
<path d="M401 100.5 l4.5 4.5 M405.5 100.5 l-4.5 4.5" stroke="#e02020" stroke-width="1.4"/>
<rect x="402" y="103" width="13" height="1.2" fill="#3a3a5a" />
<rect x="402" y="105" width="13" height="1.2" fill="#3a3a5a" />
<rect x="401" y="107" width="13" height="1.2" fill="#3a3a5a" />
<rect x="401" y="110" width="13" height="1.2" fill="#3a3a5a" />
<rect x="401" y="112" width="13" height="1.2" fill="#3a3a5a" />
<path d="M418.5 118.5 H413.5 L418.5 113.5 Z" fill="#000"/>
<rect x="441.5" y="100.5" width="10" height="11" fill="#f0f0f0" stroke="#cfcfcf"/>
<path d="M443 103.5h7M443 105.5h7M443 107.5h7M443 109.5h7" stroke="#d4d4d4"/>
<path d="M436.3 115.5 L439.8 104.5 H443.2 L446.7 115.5 H444 L443.3 113 H439.7 L439 115.5 Z M440.3 110.8 H442.7 L441.5 106.6 Z" fill="#e2e2e2" fill-rule="evenodd" stroke="#c6c6c6" stroke-width="0.9" stroke-linejoin="round"/>
<circle cx="476" cy="102.8" r="1.4" fill="#3a3a5a"/>
<rect x="479" y="102.2" width="7.5" height="1.3" fill="#55557a" />
<circle cx="476" cy="107.7" r="1.4" fill="#3a3a5a"/>
<rect x="479" y="107.10000000000001" width="7.5" height="1.3" fill="#55557a" />
<circle cx="476" cy="112.9" r="1.4" fill="#3a3a5a"/>
<rect x="479" y="112.30000000000001" width="7.5" height="1.3" fill="#55557a" />
<path d="M502 107 L504.2 101.5 H505.8 L508 107 H506.6 L506.2 105.8 H503.8 L503.4 107 Z M504.3 104.6 H505.7 L505 102.7 Z" fill="#55557a" fill-rule="evenodd"/>
<path d="M509 102.5h5M509 104.5h5M509 106.5h5" stroke="#6a6a90" stroke-width="1"/>
<path d="M502 108.5h12M502 110.5h12M502 112.5h12" stroke="#34344e" stroke-width="1"/>
<rect x="533.5" y="97.5" width="22" height="22" fill="#fdfdfd" stroke="#a8a8a8"/>
<path d="M537.5 115.3 L541.7 101.5 H545.3 L549.5 115.3 H546.3 L545.5 112.5 H541.5 L540.7 115.3 Z M542.2 110 H544.8 L543.5 105 Z" fill="#ececf4" fill-rule="evenodd" stroke="#55557a" stroke-width="1" stroke-linejoin="round"/>
<path d="M536 102.5 h4 M548 102.5 h4" stroke="#1e2240" stroke-width="1.1"/><path d="M537.7 100.8 v3.4 M550.3 100.8 v3.4" stroke="#1e2240" stroke-width="1.1"/>
<text x="564.3" y="112.2" font-size="9.5" fill="#c4c4c4" font-family="Liberation Sans" style="text-rendering:geometricPrecision" textLength="10" lengthAdjust="spacingAndGlyphs">ab</text>
<path d="M576.4 104 v8.5 M575 103.3 q1.4 0.2 1.4 0.9 q0 -0.7 1.4 -0.9 M575 113.2 q1.4 -0.2 1.4 -0.9 q0 0.7 1.4 0.9" stroke="#b8b8b8" stroke-width="0.9" fill="none"/>
<path d="M600.5 113 L603.3 102.8 H606 L608.8 113 H606.5 L605.9 110.7 H603.4 L602.8 113 Z M603.9 108.6 H605.4 L604.65 105.5 Z" fill="#fafafa" fill-rule="evenodd" stroke="#55557a" stroke-width="1" stroke-linejoin="round"/>
<rect x="609" y="102.3" width="5" height="1.7" fill="#3e3e5a"/><rect x="609" y="106" width="5" height="1.7" fill="#3e3e5a"/><rect x="609" y="110" width="7" height="3.4" fill="#3e3e5a"/>
<path d="M636.00 101.60 L638.12 105.69 L642.66 106.44 L639.42 109.71 L640.11 114.26 L636.00 112.20 L631.89 114.26 L632.58 109.71 L629.34 106.44 L633.88 105.69Z" fill="#f2f2f6" stroke="#50506e" stroke-width="1.1" stroke-linejoin="round"/>
<rect x="661.5" y="97.5" width="22" height="22" fill="#fafafa" stroke="#a8a8a8"/>
<text x="665" y="115" font-size="17" font-style="italic" fill="#3a3a5e" font-family="Liberation Serif">O</text>
<rect x="4" y="153" width="22" height="1" fill="#d9d9d9" />
<rect x="4" y="217" width="22" height="1" fill="#d9d9d9" />
<rect x="4" y="365" width="22" height="1" fill="#d9d9d9" />
<rect x="4" y="401" width="22" height="1" fill="#d9d9d9" />
<rect x="4" y="465" width="22" height="1" fill="#d9d9d9" />
<rect x="4" y="529" width="22" height="1" fill="#d9d9d9" />
<rect x="4" y="621" width="22" height="1" fill="#d9d9d9" />
<rect x="4.5" y="96.5" width="22" height="22" fill="#fdfdfd" stroke="#a8a8a8"/>
<path d="M11.5 99.5 V111 L14 108.5 L16.5 113.5 L18.5 112.5 L16 107.5 L19.7 107 Z" fill="#e8e8f2" stroke="#7a7a9c" stroke-width="1" stroke-linejoin="round"/>
<path d="M25 117 H20 L25 112 Z" fill="#000"/>
<path d="M12.5 126.5 Q9.5 134 12.5 142.5" fill="none" stroke="#50506a" stroke-width="1.1"/>
<rect x="9.5" y="131.5" width="3" height="3" fill="#fff" stroke="#2a2a3a"/>
<path d="M14 135 L21 137.5 L17 141.5 Z" fill="#2a2a3e"/>
<path d="M25 145.5 H20 L25 140.5 Z" fill="#000"/>
<rect x="13" y="168" width="4.5" height="5.5" fill="#9a9ab0"/>
<path d="M8 167.7 H17.7 M12.7 164.5 V173.8 H21.8 M17.7 167 V177.5" stroke="#4a4a66" stroke-width="1.7" fill="none"/>
<path d="M10.5 175.5 L21.5 164.5" stroke="#55557a" stroke-width="1.1"/>
<path d="M25 181 H20 L25 176 Z" fill="#000"/>
<circle cx="13" cy="197.8" r="5.2" fill="#fff" stroke="#555570" stroke-width="1.1"/>
<path d="M8.3 198.5 A4.6 4.6 0 0 0 17.7 198.5 Z" fill="#c4c4d8"/>
<path d="M16.8 201.6 L21 205.8" stroke="#3a3a50" stroke-width="2.2"/>
<path d="M25 209 H20 L25 204 Z" fill="#000"/>
<path d="M11.5 227.5v6M8.5 230.5h6" stroke="#50506a" stroke-width="1"/>
<path d="M10.5 240 Q12 236 13.5 239 Q15 242.5 16.5 239 Q18 235.5 19.5 239 Q20.5 241 22 239.5" fill="none" stroke="#50506a" stroke-width="1.2"/>
<path d="M25 244 H20 L25 239 Z" fill="#000"/>
<path d="M10 262 Q8 261 8.8 259.8 Q10 258.5 12 259.5" fill="none" stroke="#4a4a66" stroke-width="1.2"/>
<path d="M12 259.5 Q14 260.5 15.8 263.5 Q17.5 266.3 19.5 266.3 Q22 266 21.8 263 Q21.5 260.8 19.3 261" fill="none" stroke="#4a4a66" stroke-width="2.6"/>
<rect x="9.5" y="286.5" width="11" height="11" fill="#fff" stroke="#4a4a66"/><rect x="10" y="292" width="10" height="5" fill="#d4d4e2"/>
<path d="M25 301 H20 L25 296 Z" fill="#000"/>
<circle cx="15" cy="319.8" r="5.8" fill="#fff" stroke="#4a4a66"/>
<path d="M9.7 320.5 A5.3 5.3 0 0 0 20.3 320.5 Z" fill="#d4d4e2"/>
<path d="M25 330 H20 L25 325 Z" fill="#000"/>
<path d="M11 343 H19 L22.3 348.5 L19 354 H11 L7.7 348.5 Z" fill="#fff" stroke="#4a4a66"/>
<path d="M8.5 349 H21.5 L18.7 353.5 H11.3 Z" fill="#d4d4e2"/>
<path d="M25 358 H20 L25 353 Z" fill="#000"/>
<path d="M8.5 390 L13 377 H17 L21.5 390 H18 L17 387 H13 L12 390 Z M13.8 384.3 H16.2 L15 380.5 Z" fill="#e4e4ee" fill-rule="evenodd" stroke="#55556e" stroke-width="1.1" stroke-linejoin="round"/>
<path d="M25 393 H20 L25 388 Z" fill="#000"/>
<path d="M10 422.5 L19.5 415" stroke="#2e2e48" stroke-width="1.3"/>
<path d="M8 420 l2.8 4.2 M18.3 412.5 l2.8 4.2" stroke="#2e2e48" stroke-width="1.6"/>
<path d="M10.2 422.3 l1.2 -3.2 l2 2.2z M19.3 415.2 l-1.2 3.2 l-2 -2.2z" fill="#2e2e48"/>
<path d="M25 428 H20 L25 423 Z" fill="#000"/>
<path d="M12.5 441.5 L17.5 452.5" stroke="#4a4a66" stroke-width="1.2"/>
<rect x="10.5" y="439.5" width="4" height="4" fill="#f59a20" stroke="#a05010" stroke-width="0.8"/>
<rect x="15.5" y="450.5" width="4" height="4" fill="#f59a20" stroke="#a05010" stroke-width="0.8"/>
<path d="M25 456 H20 L25 451 Z" fill="#000"/>
<rect x="10" y="480" width="10" height="9" fill="#9a9ab0"/>
<rect x="8.5" y="477.5" width="9" height="9" fill="#fff" stroke="#4a4a66"/><rect x="9" y="482" width="8" height="4" fill="#d8d8e6"/>
<path d="M25 490 H20 L25 485 Z" fill="#000"/>
<defs><linearGradient id="tg" x1="0" y1="0" x2="0" y2="1"><stop offset="0" stop-color="#b8bcd8"/><stop offset="1" stop-color="#2e3a6a"/></linearGradient></defs>
<g transform="translate(-1 0) rotate(40 16 507)"><path d="M12 504.5 H20 Q20 510.5 16 510.5 Q12 510.5 12 504.5 Z" fill="#fff" stroke="#55557a" stroke-width="1"/><path d="M12.4 507 H19.6 Q19 510 16 510 Q13 510 12.4 507 Z" fill="#3a4a80"/><path d="M16 510.5 V515.5 M13 515.5 H19" stroke="#7a7a94" stroke-width="1.1"/></g>
<path d="M16 519 L19.5 509.5 L23 519 Z" fill="url(#tg)"/>
<rect x="7" y="547.5" width="8" height="7.5" fill="#e8761a"/>
<path d="M8 549h2v2h-2zM12 549h2v2h-2zM10 551h2v2h-2zM8 553h2v2h-2zM12 553h2v2h-2z" fill="#f8b060"/>
<path d="M11.5 551 L19 543.5" stroke="#3a3a55" stroke-width="2.2"/>
<path d="M18 541 L22.5 545.5" stroke="#1a1a2a" stroke-width="3"/><circle cx="22.3" cy="540.8" r="2.3" fill="#1a1a2a"/>
<path d="M25 556 H20 L25 551 Z" fill="#000"/>
<path d="M9 572 L13.5 567.5 L18 572 L13.5 576.5 Z" fill="#fff" stroke="#4a4a66" stroke-width="1.1"/>
<path d="M10.5 573 L16.5 573 L13.5 576 Z" fill="#e8821e"/>
<path d="M14.5 583 L18.5 575.5 L22 583 Z" fill="#f0b030"/>
<path d="M25 585 H20 L25 580 Z" fill="#000"/>
<path d="M7.5 598 L11.5 594 L15.5 598 L11.5 602 Z" fill="#fff" stroke="#4a4a66" stroke-width="1.1"/>
<path d="M9 599 L14 599 L11.5 601.5 Z" fill="#e8821e"/>
<rect x="13.5" y="601.5" width="9" height="7" fill="#fff" stroke="#4a4a66"/>
<rect x="16.5" y="604.5" width="7" height="6" fill="none" stroke="#4a4a66"/>
<rect x="14" y="602" width="3" height="5" fill="#e8821e"/>
<circle cx="15" cy="642" r="6" fill="none" stroke="#8a8aa0" stroke-width="1"/>
</svg>
</body></html>
